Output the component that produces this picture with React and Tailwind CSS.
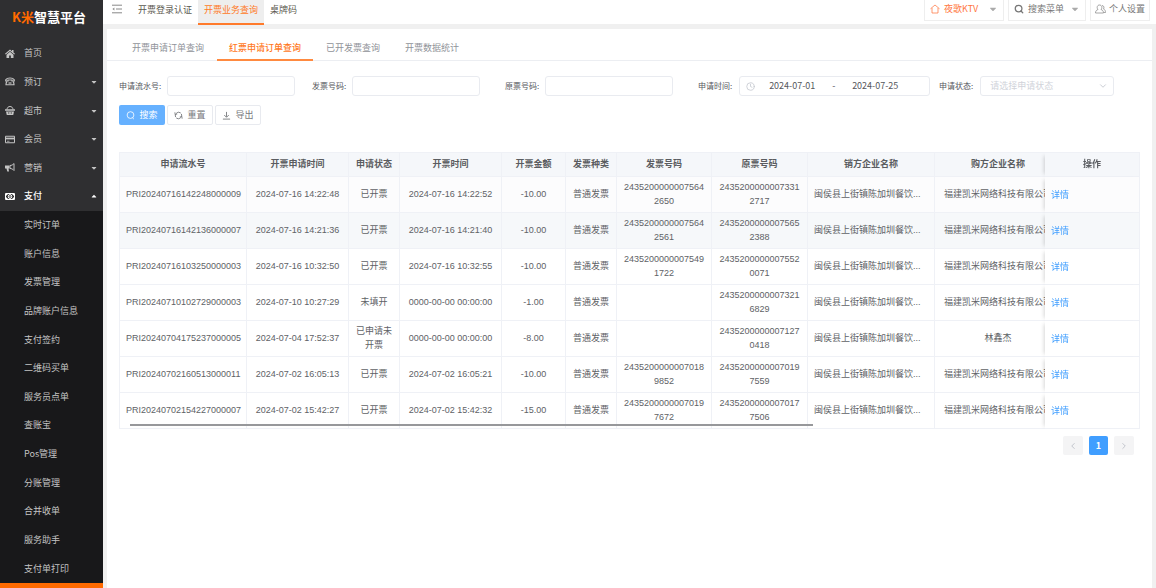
import { useState } from 'react';
import clsx from 'clsx';
import { FaCaretDown, FaCaretUp } from 'react-icons/fa';
import { ChevronDown, ChevronLeft, ChevronRight, Clock, Search } from 'lucide-react';

const HomeIcon = ({ className }) => (
  <svg viewBox="0 0 20 18" className={className} fill="currentColor">
    <path d="M10 1L0 9.5l1.5 1.6L10 4l8.500 7.100L20 9.500l-3-2.600V2h-3v2.400z" />
    <path d="M10 5.500l-7 6V18h5.300v-5h3.400v5H17v-6.500z" />
  </svg>
);

const PhoneIcon = ({ className }) => (
  <svg viewBox="0 0 20 18" className={className} fill="none" stroke="currentColor" strokeWidth="2.4">
    <path d="M1.500 8V5.500C3 3 6 2 10 2s7 1 8.500 3.500V8H14V6H6v2z" />
    <path d="M4 9c-1.500 1.500-2 3.500-2 6.500h16c0-3-.5-5-2-6.500" />
    <path d="M7 12h6" />
  </svg>
);

const BasketIcon = ({ className }) => (
  <svg viewBox="0 0 20 18" className={className} fill="none" stroke="currentColor" strokeWidth="2">
    <path d="M4 7c0-8 12-8 12 0" />
    <path d="M0 6.500h20v3H0z" fill="currentColor" stroke="none" />
    <path d="M2 11h16l-1.500 7h-13z" fill="currentColor" stroke="none" />
    <path d="M7.500 12v4M12.500 12v4" stroke="#2f2f31" strokeWidth="1.2" />
  </svg>
);

const CardIcon = ({ className }) => (
  <svg viewBox="0 0 20 18" className={className} fill="none" stroke="currentColor" strokeWidth="2">
    <path d="M1 2.500h18v13H1z" />
    <path d="M1 7h18" strokeWidth="3.500" />
    <path d="M4 12.500h5" strokeWidth="1.500" />
  </svg>
);

const HornIcon = ({ className }) => (
  <svg viewBox="0 0 20 18" className={className} fill="currentColor">
    <path d="M0 5h9v6H7l1 6H4.500L3 11H0z" />
    <path d="M10 5c3 0 6-1.500 8-4v14c-2-2.500-5-4-8-4z" fill="none" stroke="currentColor" strokeWidth="2" />
  </svg>
);

const MoneyIcon = ({ className }) => (
  <svg viewBox="0 0 20 18" className={className} fill="none" stroke="currentColor" strokeWidth="2">
    <path d="M1 3h18v12H1z" />
    <path d="M2 4h4L2 8zM18 4h-4l4 4zM2 14h4l-4-4zM18 14h-4l4-4z" fill="currentColor" stroke="none" />
    <ellipse cx="10" cy="9" rx="3.500" ry="4" />
    <path d="M10 7v4" />
  </svg>
);

const mainMenu = [
  { label: '首页', icon: HomeIcon },
  { label: '预订', icon: PhoneIcon, caret: true },
  { label: '超市', icon: BasketIcon, caret: true },
  { label: '会员', icon: CardIcon, caret: true },
  { label: '营销', icon: HornIcon, caret: true },
  { label: '支付', icon: MoneyIcon, caret: true, open: true }
];

const subMenu = [
  '实时订单', '账户信息', '发票管理', '品牌账户信息', '支付签约', '二维码买单', '服务员点单',
  '查账宝', 'Pos管理', '分账管理', '合并收单', '服务助手', '支付单打印'
];

const topTabs = ['开票登录认证', '开票业务查询', '桌牌码'];
const subTabs = ['开票申请订单查询', '红票申请订单查询', '已开发票查询', '开票数据统计'];

const columns = [
  { label: '申请流水号', width: 'w-[127px]' },
  { label: '开票申请时间', width: 'w-[102px]' },
  { label: '申请状态', width: 'w-[51px]' },
  { label: '开票时间', width: 'w-[102px]' },
  { label: '开票金额', width: 'w-16' },
  { label: '发票种类', width: 'w-[51px]' },
  { label: '发票号码', width: 'w-[95px]' },
  { label: '原票号码', width: 'w-24' },
  { label: '销方企业名称', width: 'w-[127px]' },
  { label: '购方企业名称', width: 'w-[127px]' }
];

const seller = '闽侯县上街镇陈加圳餐饮...';
const buyer = '福建凯米网络科技有限公司';

const rows = [
  ['PRI20240716142248000009', '2024-07-16 14:22:48', '已开票', '2024-07-16 14:22:52', '-10.00', '普通发票', '24352000000075642650', '24352000000073312717', seller, buyer],
  ['PRI20240716142136000007', '2024-07-16 14:21:36', '已开票', '2024-07-16 14:21:40', '-10.00', '普通发票', '24352000000075642561', '24352000000075652388', seller, buyer],
  ['PRI20240716103250000003', '2024-07-16 10:32:50', '已开票', '2024-07-16 10:32:55', '-10.00', '普通发票', '24352000000075491722', '24352000000075520071', seller, buyer],
  ['PRI20240710102729000003', '2024-07-10 10:27:29', '未填开', '0000-00-00 00:00:00', '-1.00', '普通发票', '', '24352000000073216829', seller, buyer],
  ['PRI20240704175237000005', '2024-07-04 17:52:37', '已申请未开票', '0000-00-00 00:00:00', '-8.00', '普通发票', '', '24352000000071270418', seller, '林鑫杰'],
  ['PRI20240702160513000011', '2024-07-02 16:05:13', '已开票', '2024-07-02 16:05:21', '-10.00', '普通发票', '24352000000070189852', '24352000000070197559', seller, buyer],
  ['PRI20240702154227000007', '2024-07-02 15:42:27', '已开票', '2024-07-02 15:42:32', '-15.00', '普通发票', '24352000000070197672', '24352000000070177506', seller, buyer]
];

function Sidebar() {
  return (
    <aside className="flex h-screen w-[103px] shrink-0 flex-col bg-[#2f2f31] text-[#c4c4c4]">
      <div className="flex h-[39px] shrink-0 items-center pb-[6px] pl-3 text-[13px] font-bold text-white">
        <span className="text-[#ff6a00]">K米</span>
        <span>智慧平台</span>
      </div>
      <nav className="flex min-h-0 flex-1 flex-col">
        {mainMenu.map(({ label, icon: Icon, caret, open }) => (
          <button
            key={label}
            className={clsx('flex min-h-0 flex-1 items-center px-[5px]', open && 'font-medium text-white')}
          >
            <Icon className="h-[9px] w-[10px]" />
            <span className="ml-[9px] flex-1 text-left">{label}</span>
            {caret && (open ? <FaCaretUp className="size-2" /> : <FaCaretDown className="size-2" />)}
          </button>
        ))}
        {subMenu.map((label) => (
          <a key={label} href="#" className="flex min-h-0 flex-1 items-center bg-[#18181a] pl-6">
            {label}
          </a>
        ))}
      </nav>
      <div className="h-[5px] shrink-0 bg-[#ff6a00]" />
    </aside>
  );
}

function TopBar() {
  const [active, setActive] = useState(1);

  return (
    <header className="flex h-6 items-start bg-white pl-[9px] pr-[6px]">
      <button className="mt-1 mr-[10px] text-[#888]" aria-label="菜单">
        <svg viewBox="0 0 10 10" className="size-[10px]" fill="none" stroke="currentColor">
          <path d="M0 1.2h10M4 5h6M0 8.8h10" />
          <path d="M2.4 3.4v3.2L.4 5z" fill="currentColor" stroke="none" />
        </svg>
      </button>
      {topTabs.map((label, i) => (
        <button
          key={label}
          onClick={() => setActive(i)}
          className={clsx(
            'h-[25px] border-b-2 px-[6px] pb-1',
            i === active ? 'border-[#ff7a2b] bg-[#eeeeee] text-[#ff7a1f]' : 'border-transparent text-[#5c5a50]'
          )}
        >
          {label}
        </button>
      ))}
      <div className="ml-auto flex items-start gap-1 text-[#777]">
        <button className="flex h-[21px] w-20 items-center border border-t-0 border-[#eeeeee] px-[5px] pb-[2px] text-[#ff7640]">
          <svg viewBox="0 0 20 20" className="size-[10px]" fill="none" stroke="currentColor" strokeWidth="1.5">
            <path d="M1 9.5L10 2l9 7.5M4 8v10h12V8" />
          </svg>
          <span className="ml-1">夜歌KTV</span>
          <FaCaretDown className="ml-auto size-[10px] text-[#aaa]" />
        </button>
        <button className="flex h-[21px] w-[78px] items-center border border-t-0 border-[#eeeeee] px-[5px] pb-[2px]">
          <Search className="size-[10px]" strokeWidth={3} />
          <span className="ml-1">搜索菜单</span>
          <FaCaretDown className="ml-auto size-[10px] text-[#aaa]" />
        </button>
        <button className="flex h-[21px] w-[60px] items-center border border-t-0 border-[#eeeeee] pl-1 pb-[2px]">
          <svg viewBox="0 0 22 20" className="h-[10px] w-[11px] shrink-0" fill="none" stroke="currentColor" strokeWidth="1.3">
            <path d="M1 18c0-4 2-6 5-7-3-3-2-9 3-9s6 6 3 9c3 1 5 3 5 7z" />
            <path d="M14 3c4 0 5 5 3 7 3 1 4 4 4 7h-3" />
          </svg>
          <span className="ml-[3px] whitespace-nowrap">个人设置</span>
        </button>
      </div>
    </header>
  );
}

function TextField({ id, label }) {
  return (
    <div className="flex w-[193px] items-center">
      <label htmlFor={id} className="mr-[6px] text-[8px]">{label}:</label>
      <input id={id} className="h-5 w-32 rounded-[3px] border border-[#e9ebf0] px-2 outline-none" />
    </div>
  );
}

function Filters() {
  return (
    <form className="pt-[15px]" onSubmit={(e) => e.preventDefault()}>
      <div className="flex flex-wrap items-center gap-y-2 text-[#55575c]">
        <TextField id="serial" label="申请流水号" />
        <TextField id="invoice" label="发票号码" />
        <TextField id="origin" label="原票号码" />
        <div className="flex w-[241px] items-center">
          <label htmlFor="start" className="mr-[7px] text-[8px]">申请时间:</label>
          <div className="flex h-5 w-[191px] items-center rounded-[3px] border border-[#e9ebf0] px-[6px]">
            <Clock className="size-[9px] text-[#c0c4cc]" />
            <input id="start" defaultValue="2024-07-01" className="w-[74px] text-center outline-none" />
            <span className="w-[9px] text-center">-</span>
            <input aria-label="结束时间" defaultValue="2024-07-25" className="w-[74px] text-center outline-none" />
          </div>
        </div>
        <div className="flex items-center">
          <label htmlFor="status" className="mr-[7px] text-[8px]">申请状态:</label>
          <div className="relative">
            <select
              id="status"
              className="block h-5 w-[134px] appearance-none rounded-[3px] border border-[#e9ebf0] bg-white pl-[9px] text-[#d0d3da] outline-none"
            >
              <option>请选择申请状态</option>
            </select>
            <ChevronDown className="pointer-events-none absolute top-[5px] right-[6px] size-[10px] text-[#c0c4cc]" />
          </div>
        </div>
      </div>
      <div className="mt-[9px] flex gap-[2px] text-[#77797d]">
        <button className="flex h-5 w-[46px] items-center justify-center gap-1 rounded-[2px] bg-[#66b1ff] text-white">
          <svg viewBox="0 0 20 20" className="size-[9px]" fill="none" stroke="currentColor" strokeWidth="1.8">
            <circle cx="10" cy="9" r="7.5" />
            <path d="M14.5 15l3 3" />
          </svg>
          搜索
        </button>
        <button className="flex h-5 w-[46px] items-center justify-center gap-1 rounded-[2px] border border-[#e8eaef]">
          <svg viewBox="0 0 20 20" className="size-[9px]" fill="none" stroke="currentColor" strokeWidth="2">
            <path d="M3.500 13.500A7.500 7.500 0 0 1 15 4.500M16.500 6.500A7.500 7.500 0 0 1 5 15.500" />
            <path d="M2 2.500v5h5M18 17.500v-5h-5" strokeWidth="1.500" />
          </svg>
          重置
        </button>
        <button className="flex h-5 w-[46px] items-center justify-center gap-1 rounded-[2px] border border-[#e8eaef]">
          <svg viewBox="0 0 20 20" className="size-[9px]" fill="none" stroke="currentColor" strokeWidth="2">
            <path d="M10 2v11M5 9l5 5 5-5M2 18h16" />
          </svg>
          导出
        </button>
      </div>
    </form>
  );
}

function InvoiceTable() {
  return (
    <div className="relative mt-[27px] border-t border-l border-[#eff1f6]">
      <div className="overflow-x-auto [scrollbar-width:none]">
        <table className="w-full min-w-[1036px] table-fixed border-separate border-spacing-0 text-center font-['Liberation_Sans','Noto_Sans_CJK_SC',sans-serif] leading-[14px] text-[#606266]">
          <thead>
            <tr className="h-6 bg-[#f5f7fa] text-[#5a5c60]">
              {columns.map(({ label, width }) => (
                <th key={label} className={clsx('border-r border-b border-[#eff1f6] px-0 pt-0 pb-[2px]', width)}>{label}</th>
              ))}
              <th className="sticky right-0 w-[95px] border-r border-b border-[#eff1f6] bg-[#f5f7fa] px-0 pt-0 pb-[2px] shadow-[-4px_0_4px_-3px_rgba(0,0,0,0.16)]">
                操作
              </th>
            </tr>
          </thead>
          <tbody>
            {rows.map((row, r) => {
              const bg = r === 0 ? 'bg-[#fcfcfd]' : r === 1 ? 'bg-[#f6f8fa]' : 'bg-white';
              return (
                <tr key={row[0]} className={clsx('h-9', bg)}>
                  {row.map((cell, c) => (
                    <td
                      key={c}
                      className={clsx(
                        'border-r border-b border-[#eff1f6] px-[6px] pt-0 pb-[2px]',
                        c === 8 && 'text-left',
                        c > 7 || c < 2 || c === 3 ? 'whitespace-nowrap' : 'break-all'
                      )}
                    >
                      {cell}
                    </td>
                  ))}
                  <td className={clsx('sticky right-0 border-r border-b border-[#eff1f6] px-[6px] py-0 text-left shadow-[-4px_0_4px_-3px_rgba(0,0,0,0.16)]', bg)}>
                    <a href="#" className="text-[#409eff]">详情</a>
                  </td>
                </tr>
              );
            })}
          </tbody>
        </table>
      </div>
      <div className="absolute bottom-[3px] left-[10px] h-[2px] w-[67%] bg-[#97989b]" />
    </div>
  );
}

function Pagination() {
  return (
    <div className="mt-[7px] flex justify-end gap-[6px] pr-[6px] font-bold">
      <button className="flex h-[19px] w-5 items-center justify-center rounded-[2px] bg-[#f4f4f5] text-[#b8bcc4]" aria-label="上一页">
        <ChevronLeft className="size-[10px]" />
      </button>
      <button className="h-[19px] w-[19px] rounded-[2px] bg-[#409eff] text-white">1</button>
      <button className="flex h-[19px] w-5 items-center justify-center rounded-[2px] bg-[#f4f4f5] text-[#b8bcc4]" aria-label="下一页">
        <ChevronRight className="size-[10px]" />
      </button>
    </div>
  );
}

export default function App() {
  const [active, setActive] = useState(1);

  return (
    <div className="flex h-screen overflow-hidden bg-[#f0f0f0] font-['Noto_Sans_CJK_SC',sans-serif] text-[9px] leading-[14px]">
      <Sidebar />
      <div className="flex min-w-0 flex-1 flex-col">
        <TopBar />
        <main className="mt-[5px] mr-[4px] ml-1 flex-1 overflow-auto bg-white">
          <div className="flex h-8 gap-px border-b border-[#eceef2] pl-[13px]">
            {subTabs.map((label, i) => (
              <button
                key={label}
                onClick={() => setActive(i)}
                className={clsx(
                  'h-8 border-b-2 px-3 pt-[7px]',
                  i === active ? 'border-[#ff8a40] font-medium text-[#ff7a1f]' : 'border-transparent text-[#909399]'
                )}
              >
                {label}
              </button>
            ))}
          </div>
          <div className="px-3">
            <Filters />
            <InvoiceTable />
            <Pagination />
          </div>
        </main>
      </div>
    </div>
  );
}
